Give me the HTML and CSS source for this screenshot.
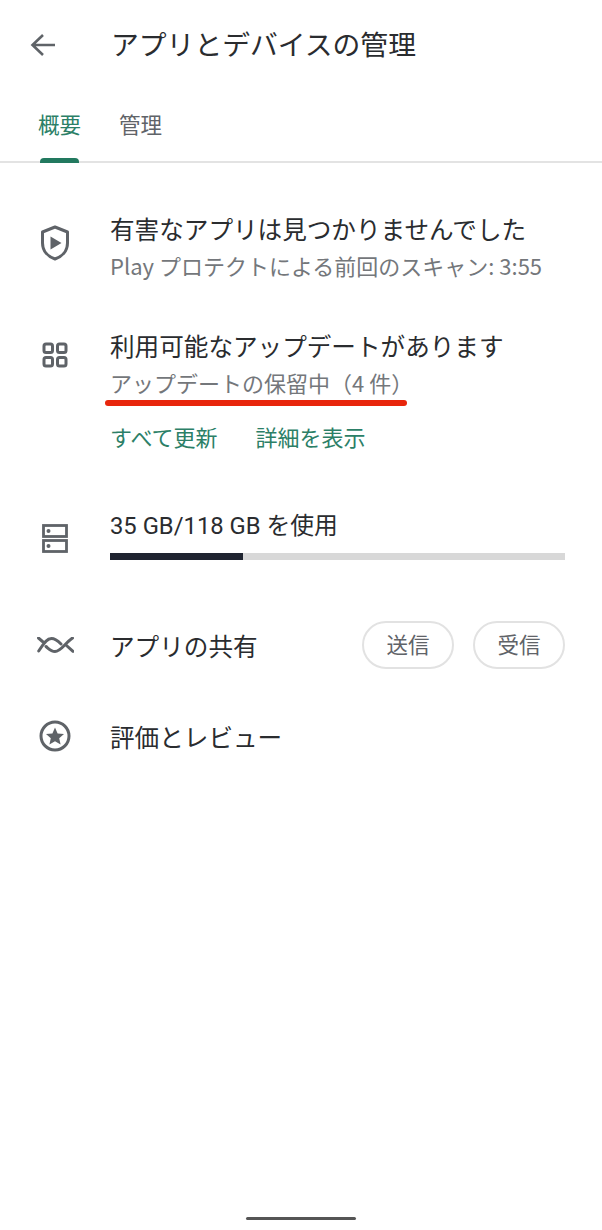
FILE: index.html
```html
<!DOCTYPE html>
<html lang="ja">
<head>
<meta charset="utf-8">
<title>アプリとデバイスの管理</title>
<link rel="stylesheet" href="styles.css">
</head>
<body>
<div class="screen">
  <header class="appbar">
    <svg class="back" viewBox="0 0 26 24" width="26" height="24"><path d="M25 12H3M13 2 2.500 12 13 22" fill="none" stroke="#5f6368" stroke-width="2.600"/></svg>
    <h1 class="title">アプリとデバイスの管理</h1>
  </header>
  <nav class="tabs">
    <div class="tab tab-active">概要<span class="tab-ind"></span></div>
    <div class="tab">管理</div>
  </nav>
  <main class="list">
    <section class="row row-protect">
      <div class="icon"><svg viewBox="0 0 30 36" width="30" height="36"><path d="M15 2 27.500 7v11c0 8-5.400 13.600-12.500 16C7.900 31.600 2.500 26 2.500 18V7Z" fill="none" stroke="#5f6368" stroke-width="3" stroke-linejoin="round"/><path d="M10.500 11.500v13L21.500 18Z" fill="#5f6368"/></svg></div>
      <div class="body">
        <div class="t1">有害なアプリは見つかりませんでした</div>
        <div class="t2">Play プロテクトによる前回のスキャン: 3:55</div>
      </div>
    </section>
    <section class="row row-update">
      <div class="icon"><svg viewBox="0 0 26 26" width="26" height="26"><g fill="none" stroke="#5f6368" stroke-width="3"><rect x="2" y="2" width="8.500" height="8.500" rx="2"/><rect x="15.500" y="2" width="8.500" height="8.500" rx="2"/><rect x="2" y="15.500" width="8.500" height="8.500" rx="2"/><rect x="15.500" y="15.500" width="8.500" height="8.500" rx="2"/></g></svg></div>
      <div class="body">
        <div class="t1">利用可能なアップデートがあります</div>
        <div class="t2 t2-mark">アップデートの保留中（4 件）<span class="redline"></span></div>
        <div class="links"><span class="link">すべて更新</span><span class="link">詳細を表示</span></div>
      </div>
    </section>
    <section class="row row-storage">
      <div class="icon"><svg viewBox="0 0 26 29" width="26" height="29"><g fill="none" stroke="#5f6368" stroke-width="2.800"><rect x="1.500" y="1.500" width="23" height="11"/><rect x="1.500" y="16.500" width="23" height="11"/></g><circle cx="6.500" cy="7" r="2" fill="#5f6368"/><circle cx="6.500" cy="22" r="2" fill="#5f6368"/></svg></div>
      <div class="body">
        <div class="t1 t1-storage">35 GB/118 GB を使用</div>
        <div class="bar"><div class="bar-fill"></div></div>
      </div>
    </section>
    <section class="row row-share">
      <div class="icon"><svg viewBox="0 0 37 16" width="37" height="16"><path d="M1.700 14C6 8 9 1.500 14.500 1.500 18.500 1.500 21 4 24 7M9 9.500c3 2.500 5 5 9 5 6 0 10-8.500 17.500-13.500M1.500 1l4 3.500M29.500 8.500l6.500 5.800" fill="none" stroke="#5f6368" stroke-width="3" stroke-linecap="round"/></svg></div>
      <div class="t1 share-label">アプリの共有</div>
      <div class="chips"><span class="chip">送信</span><span class="chip">受信</span></div>
    </section>
    <section class="row row-review">
      <div class="icon"><svg viewBox="0 0 32 32" width="32" height="32"><circle cx="16" cy="16" r="14" fill="none" stroke="#5f6368" stroke-width="3"/><path d="m16 7.500 2.600 5.900 6.400.600-4.800 4.200 1.400 6.300-5.600-3.300-5.600 3.300 1.400-6.300L7 14l6.400-.600Z" fill="#5f6368"/></svg></div>
      <div class="t1">評価とレビュー</div>
    </section>
  </main>
  <div class="home-wrap"><div class="home"></div></div>
</div>
</body>
</html>
```
FILE: styles.css
```css
* { box-sizing: border-box; }
html, body { margin: 0; padding: 0; background: #fff; }
body { font-family: "Noto Sans CJK JP", "Roboto", sans-serif; color: #2a2c2f; }
.screen { width: 602px; height: 1230px; display: flex; flex-direction: column; overflow: hidden; }
.appbar { height: 90px; display: flex; align-items: center; padding-left: 30px; }
.back { flex: none; }
.title { margin: -4px 0 0 55px; font-size: 27.800px; font-weight: 400; line-height: 40px; color: #2a2c2f; }
.tabs { height: 73px; display: flex; padding-left: 38px; gap: 38px; border-bottom: 2px solid #e3e3e3; }
.tab { position: relative; font-size: 21.500px; line-height: 32px; padding-top: 18px; color: #5f6368; }
.tab-active { color: #2c7f67; }
.tab-ind { position: absolute; left: 2px; right: 2px; bottom: -2px; height: 5px; background: #22795f; border-radius: 4px 4px 0 0; }
.list { flex: 1; display: flex; flex-direction: column; }
.row { display: flex; }
.icon { flex: none; width: 110px; display: flex; justify-content: center; }
.body { flex: 1; padding-right: 37px; }
.t1 { font-size: 24.600px; line-height: 36px; color: #2a2c2f; }
.t2 { font-size: 22px; line-height: 32px; color: #74777b; white-space: nowrap; }
.row-protect { padding-top: 47px; }
.row-protect .icon { padding-top: 15px; }
.row-protect .t2 { margin-top: 3px; }
.row-update { padding-top: 46px; }
.row-update .icon { padding-top: 15px; }
.row-update .t2 { margin-top: 3px; }
.t2-mark { position: relative; }
.redline { position: absolute; left: -5px; top: 34px; width: 302px; height: 6px; background: #e8260c; border-radius: 3px; }
.links { display: flex; gap: 38px; margin-top: 22px; font-size: 22px; line-height: 32px; color: #2c7f67; }
.row-storage { padding-top: 56px; }
.row-storage .icon { padding-top: 16px; }
.t1-storage { font-family: "Roboto", "Noto Sans CJK JP", sans-serif; font-size: 23.800px; }
.bar { height: 7px; margin-top: 9px; background: #d8d8d8; }
.bar-fill { width: 133px; height: 7px; background: #1f2430; }
.row-share { padding-top: 61px; align-items: center; padding-right: 37px; }
.share-label { flex: 1; }
.chips { display: flex; gap: 19px; }
.chip { width: 92px; height: 48px; padding-bottom: 3px; border: 2px solid #e2e2e2; border-radius: 24px; display: flex; align-items: center; justify-content: center; font-size: 21.500px; color: #5f6368; }
.row-review { padding-top: 49px; align-items: center; }
.home-wrap { display: flex; justify-content: center; padding-bottom: 10px; }
.home { width: 110px; height: 3px; background: #555; border-radius: 2px; }
```
